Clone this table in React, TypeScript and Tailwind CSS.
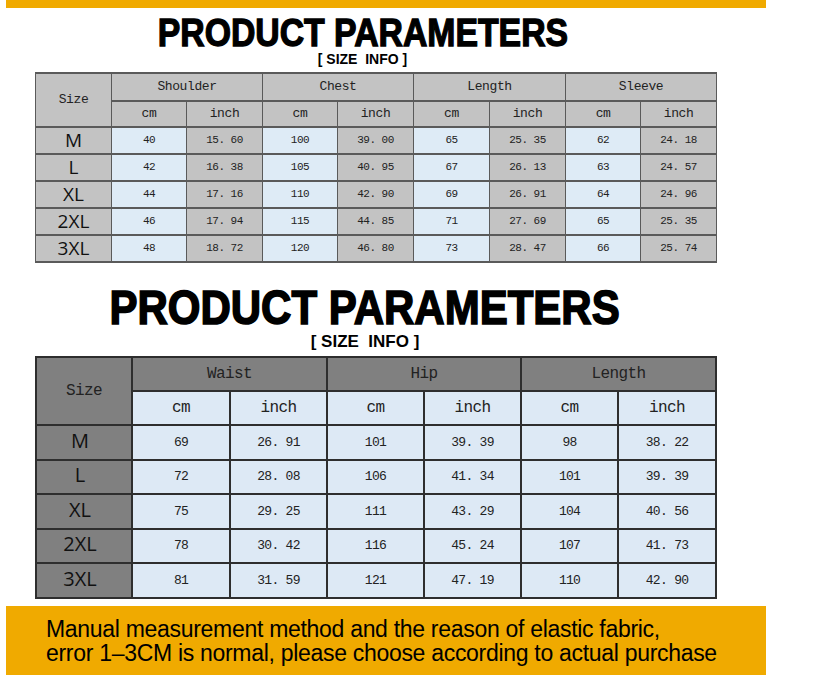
import React from 'react';

const top = [
  ['M', '40', '15.60', '100', '39.00', '65', '25.35', '62', '24.18'],
  ['L', '42', '16.38', '105', '40.95', '67', '26.13', '63', '24.57'],
  ['XL', '44', '17.16', '110', '42.90', '69', '26.91', '64', '24.96'],
  ['2XL', '46', '17.94', '115', '44.85', '71', '27.69', '65', '25.35'],
  ['3XL', '48', '18.72', '120', '46.80', '73', '28.47', '66', '25.74'],
];

const bottom = [
  ['M', '69', '26.91', '101', '39.39', '98', '38.22'],
  ['L', '72', '28.08', '106', '41.34', '101', '39.39'],
  ['XL', '75', '29.25', '111', '43.29', '104', '40.56'],
  ['2XL', '78', '30.42', '116', '45.24', '107', '41.73'],
  ['3XL', '81', '31.59', '121', '47.19', '110', '42.90'],
];

const mono = "font-['Liberation_Mono',monospace] text-[#222]";
const sizeFont = "font-['Open_Sans','Noto_Sans',sans-serif] text-[#111]";

function Title({ big }: { big?: boolean }) {
  return (
    <div className="flex flex-col items-center">
      <h1
        className={
          big
            ? "font-['Liberation_Sans',Arial,sans-serif] font-bold text-[48px] leading-[40px] scale-x-[0.875] [-webkit-text-stroke:1.6px_black] text-black whitespace-nowrap"
            : "font-['Liberation_Sans',Arial,sans-serif] font-bold text-[39px] leading-[30px] scale-x-[0.866] [-webkit-text-stroke:1.3px_black] text-black whitespace-nowrap"
        }
      >
        PRODUCT PARAMETERS
      </h1>
      <p
        className={
          big
            ? "font-['Liberation_Sans',Arial,sans-serif] font-bold text-[17px] leading-[20px] mt-[4px] whitespace-pre"
            : "font-['Liberation_Sans',Arial,sans-serif] font-bold text-[14px] leading-[16px] mt-[3px] whitespace-pre"
        }
      >
        {'[ SIZE  INFO ]'}
      </p>
    </div>
  );
}

function TopTable() {
  const td = 'border-x border-y-2 border-[#5a5a5a] text-center p-0';
  return (
    <table className="table-fixed border-collapse w-[681px] bg-[#c3c3c3]">
      <colgroup>
        <col className="w-[76px]" />
        {[75, 76, 75, 76, 76, 76, 75, 76].map((w, i) => (
          <col key={i} style={{ width: w }} />
        ))}
      </colgroup>
      <tbody>
        <tr className="h-[28px]">
          <td rowSpan={2} className={`${td} ${mono} text-[13px] tracking-[-0.4px]`}>Size</td>
          {['Shoulder', 'Chest', 'Length', 'Sleeve'].map((h) => (
            <td key={h} colSpan={2} className={`${td} ${mono} text-[13px] tracking-[-0.4px]`}>
              {h}
            </td>
          ))}
        </tr>
        <tr className="h-[26px]">
          {[0, 1, 2, 3].flatMap((i) => [
            <td key={`c${i}`} className={`${td} ${mono} text-[13px] tracking-[-0.4px]`}>cm</td>,
            <td key={`i${i}`} className={`${td} ${mono} text-[13px] tracking-[-0.4px]`}>inch</td>,
          ])}
        </tr>
        {top.map((r) => (
          <tr key={r[0]} className="h-[27px]">
            <td className={`${td} ${sizeFont} text-[19px] leading-none`}>{r[0]}</td>
            {r.slice(1).map((v, i) => (
              <td
                key={i}
                className={`${td} ${mono} text-[11px] tracking-[-0.5px] ${i % 2 === 0 ? 'bg-[#deebf6]' : ''}`}
              >
                {v.replace('.', '. ')}
              </td>
            ))}
          </tr>
        ))}
      </tbody>
    </table>
  );
}

function BottomTable() {
  const td = 'border-2 border-[#2e2e2e] text-center p-0';
  return (
    <table className="table-fixed border-collapse w-[680px] bg-[#dde9f5]">
      <colgroup>
        {[96, 98, 97, 97, 97, 97, 98].map((w, i) => (
          <col key={i} style={{ width: w }} />
        ))}
      </colgroup>
      <tbody>
        <tr className="h-[34px]">
          <td rowSpan={2} className={`${td} ${mono} bg-[#808080] text-[16px] tracking-[-0.6px]`}>Size</td>
          {['Waist', 'Hip', 'Length'].map((h) => (
            <td key={h} colSpan={2} className={`${td} ${mono} bg-[#808080] text-[16px] tracking-[-0.6px]`}>
              {h}
            </td>
          ))}
        </tr>
        <tr className="h-[34px]">
          {[0, 1, 2].flatMap((i) => [
            <td key={`c${i}`} className={`${td} ${mono} text-[16px] tracking-[-0.6px]`}>cm</td>,
            <td key={`i${i}`} className={`${td} ${mono} text-[16px] tracking-[-0.6px]`}>inch</td>,
          ])}
        </tr>
        {bottom.map((r, k) => (
          <tr key={r[0]} className={k % 2 === 0 ? 'h-[35px]' : 'h-[34px]'}>
            <td className={`${td} ${sizeFont} bg-[#808080] text-[20px] leading-none pr-[8px] pb-[4px]`}>{r[0]}</td>
            {r.slice(1).map((v, i) => (
              <td key={i} className={`${td} ${mono} text-[13px] tracking-[-0.7px]`}>
                {v.replace('.', '. ')}
              </td>
            ))}
          </tr>
        ))}
      </tbody>
    </table>
  );
}

export default function App() {
  return (
    <div className="w-[816px] h-[675px] bg-white overflow-hidden flex flex-col">
      <div className="ml-[6px] w-[760px] h-[8px] bg-[#f0aa00]" />
      <div className="w-[725px] mt-[10px]">
        <Title />
      </div>
      <div className="ml-[35px] mt-[5px]">
        <TopTable />
      </div>
      <div className="w-[730px] mt-[25px]">
        <Title big />
      </div>
      <div className="ml-[35px] mt-[4px]">
        <BottomTable />
      </div>
      <div className="ml-[6px] mt-[7px] w-[760px] flex-1 bg-[#f0aa00] pl-[40px] pt-[11px]">
        <p className="font-['Liberation_Sans',Arial,sans-serif] text-[23px] leading-[24px] text-black tracking-[-0.3px]">
          Manual measurement method and the reason of elastic fabric,
          <br />
          error 1–3CM is normal, please choose according to actual purchase
        </p>
      </div>
    </div>
  );
}
